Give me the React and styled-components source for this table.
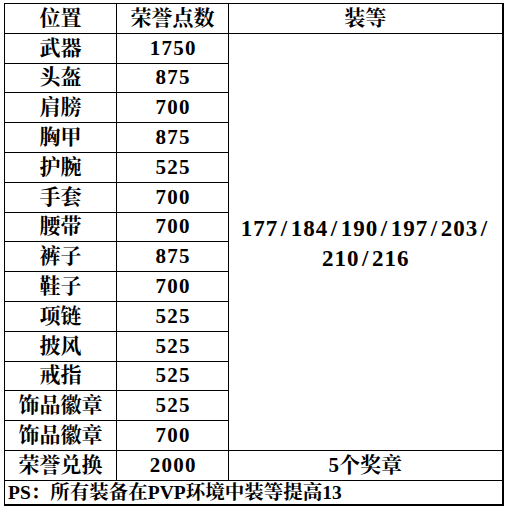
import React from 'react';
import styled, { createGlobalStyle } from 'styled-components';

const GlobalStyle = createGlobalStyle`
  html, body {
    margin: 0;
    padding: 0;
    background: #ffffff;
  }
  body {
    font-family: "Liberation Serif", "Noto Serif CJK SC", "Noto Sans CJK SC", serif;
    color: #000;
  }
`;

const Sheet = styled.div`
  width: 506px;
  height: 512px;
  padding: 3px 0 0 4px;
  box-sizing: border-box;
  overflow: hidden;
`;

const Table = styled.table`
  border-collapse: collapse;
  table-layout: fixed;
  width: 498px;
  border-right: 2px solid #000;
  border-bottom: 2px solid #000;
`;

const Row = styled.tr`
  height: ${(p) => (p.$short ? '25px' : '29.8px')};
`;

const Cell = styled.td`
  border: 1px solid #000;
  padding: 0;
  text-align: ${(p) => (p.$note ? 'left' : 'center')};
  padding-left: ${(p) => (p.$note ? '3px' : '0')};
  vertical-align: middle;
  font-size: ${(p) => (p.$note ? '19.5px' : '21px')};
  font-weight: bold;
  line-height: 1;
  white-space: nowrap;
`;

const BigText = styled.div`
  font-size: 23px;
  font-weight: bold;
  line-height: 30px;
  padding-top: 4px;
`;

const Slot = styled.span`
  display: inline-block;
  width: ${(p) => p.$w || '12.5px'};
  text-align: center;
`;

const rows = [
  ['武器', '1750'],
  ['头盔', '875'],
  ['肩膀', '700'],
  ['胸甲', '875'],
  ['护腕', '525'],
  ['手套', '700'],
  ['腰带', '700'],
  ['裤子', '875'],
  ['鞋子', '700'],
  ['项链', '525'],
  ['披风', '525'],
  ['戒指', '525'],
  ['饰品徽章', '525'],
  ['饰品徽章', '700'],
];

// every character sits in an equal-width slot, like the sheet's half-width font
const mono = (text, w) =>
  text.split('').map((ch, i) => (
    <Slot key={i} $w={w}>
      {ch}
    </Slot>
  ));

export default function App() {
  return (
    <Sheet>
      <GlobalStyle />
      <Table>
        <colgroup>
          <col style={{ width: 112 }} />
          <col style={{ width: 112 }} />
          <col style={{ width: 274 }} />
        </colgroup>
        <tbody>
          <Row>
            <Cell>位置</Cell>
            <Cell>荣誉点数</Cell>
            <Cell>装等</Cell>
          </Row>
          {rows.map(([slot, points], i) => (
            <Row key={i}>
              <Cell>{slot}</Cell>
              <Cell>{mono(points, '11.75px')}</Cell>
              {i === 0 && (
                <Cell rowSpan={rows.length}>
                  <BigText>
                    {mono('177/184/190/197/203/')}
                    <br />
                    {mono('210/216')}
                  </BigText>
                </Cell>
              )}
            </Row>
          ))}
          <Row>
            <Cell>荣誉兑换</Cell>
            <Cell>{mono('2000', '11.75px')}</Cell>
            <Cell>5个奖章</Cell>
          </Row>
          <Row $short>
            <Cell colSpan={3} $note>
              PS：所有装备在PVP环境中装等提高13
            </Cell>
          </Row>
        </tbody>
      </Table>
    </Sheet>
  );
}
